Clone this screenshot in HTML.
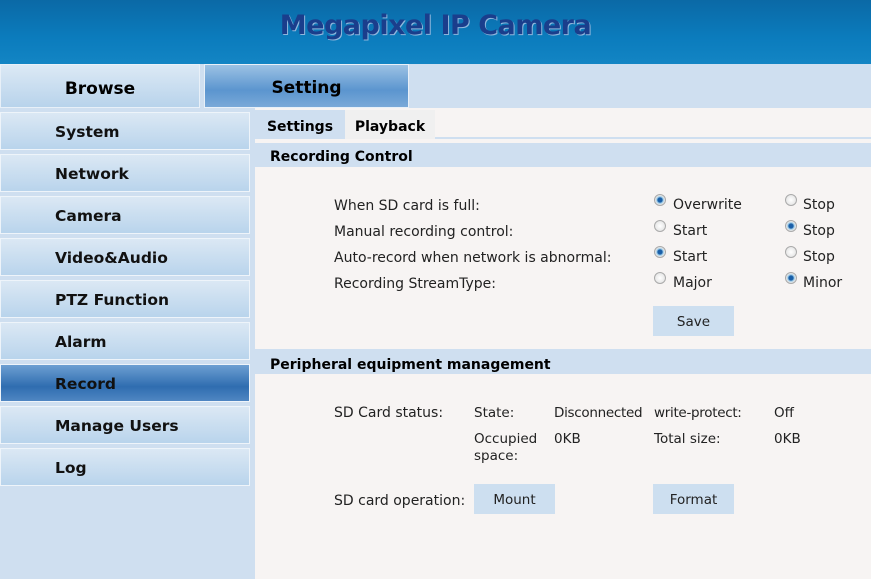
<!DOCTYPE html><html><head><style>
*{margin:0;padding:0;box-sizing:border-box}
body{width:871px;height:579px;overflow:hidden;background:#cfdff0;font-family:"DejaVu Sans","Liberation Sans",sans-serif;position:relative}
.a{position:absolute}
#hd{left:0;top:0;width:871px;height:64px;background:linear-gradient(#0b69a6,#0b7cbd 60%,#1385c4)}
#hd span{position:absolute;left:0;width:871px;top:10px;text-align:center;font:bold 27px "DejaVu Sans",sans-serif;color:#1a3e8c;text-shadow:1px 1px 0 #8fb6dc;letter-spacing:-0.5px}
.tb{top:64px;height:44px;font-weight:bold;font-size:17px;text-align:center;line-height:48px;border:1px solid #e8f0f8}
.nb{left:0;width:250px;height:38px;font-weight:bold;font-size:15.5px;padding-left:54px;line-height:38px;background:linear-gradient(#dbe8f4,#b9d4ec);border:1px solid #eef4fa;color:#111}
.t{font-size:14px;color:#222}
.s{font-size:13.5px;color:#222}
.r{width:12px;height:12px;border-radius:50%;border:1px solid #aaa;background:radial-gradient(#fff,#ddd)}
.r.on{background:radial-gradient(#1a5fa8 30%,#9ccbe8 45%,#e8e8e8 65%)}
.btn{background:#cddff0;height:30px;width:81px;text-align:center;line-height:32px;font-size:13.5px;color:#222}
</style></head><body>
<div id="hd" class="a"><span>Megapixel IP Camera</span></div>
<div class="a tb" style="left:0;width:200px;background:linear-gradient(#dce9f5,#b8d3eb)">Browse</div>
<div class="a tb" style="left:204px;width:205px;line-height:46px;background:linear-gradient(#9cc2e4,#5b95cf 60%,#7aa9d8)">Setting</div>
<div class="a nb" style="top:112px">System</div>
<div class="a nb" style="top:154px">Network</div>
<div class="a nb" style="top:196px">Camera</div>
<div class="a nb" style="top:238px">Video&amp;Audio</div>
<div class="a nb" style="top:280px">PTZ Function</div>
<div class="a nb" style="top:322px">Alarm</div>
<div class="a nb" style="top:364px;background:linear-gradient(#6d9fd2,#2f6db0 60%,#4f86c2)">Record</div>
<div class="a nb" style="top:406px">Manage Users</div>
<div class="a nb" style="top:448px">Log</div>
<div class="a" style="left:255px;top:108px;width:616px;height:471px;background:#f7f4f3"></div>
<div class="a" style="left:255px;top:108px;width:616px;height:31px;background:#f7f4f3;border-bottom:2px solid #cfdff0"></div>
<div class="a" style="left:255px;top:110px;width:90px;height:29px;background:#cfdff0;font-weight:bold;font-size:14px;line-height:34px;text-align:center">Settings</div>
<div class="a" style="left:345px;top:110px;width:90px;height:29px;background:#f0f0f0;font-weight:bold;font-size:14px;line-height:34px;text-align:center">Playback</div>
<div class="a" style="left:255px;top:143px;width:616px;height:24px;background:#cfdff0;font-weight:bold;font-size:14px;line-height:28px;padding-left:15px">Recording Control</div>
<div class="a" style="left:255px;top:349px;width:616px;height:25px;background:#cfdff0;font-weight:bold;font-size:14px;line-height:32px;padding-left:15px">Peripheral equipment management</div>
<div class="a t" style="left:334px;top:198px">When SD card is full:</div>
<div class="a t" style="left:334px;top:224px">Manual recording control:</div>
<div class="a t" style="left:334px;top:250px">Auto-record when network is abnormal:</div>
<div class="a t" style="left:334px;top:276px">Recording StreamType:</div>
<div class="a r on" style="left:654px;top:194px"></div><div class="a t" style="left:673px;top:197px">Overwrite</div>
<div class="a r" style="left:785px;top:194px"></div><div class="a t" style="left:803px;top:197px">Stop</div>
<div class="a r" style="left:654px;top:220px"></div><div class="a t" style="left:673px;top:223px">Start</div>
<div class="a r on" style="left:785px;top:220px"></div><div class="a t" style="left:803px;top:223px">Stop</div>
<div class="a r on" style="left:654px;top:246px"></div><div class="a t" style="left:673px;top:249px">Start</div>
<div class="a r" style="left:785px;top:246px"></div><div class="a t" style="left:803px;top:249px">Stop</div>
<div class="a r" style="left:654px;top:272px"></div><div class="a t" style="left:673px;top:275px">Major</div>
<div class="a r on" style="left:785px;top:272px"></div><div class="a t" style="left:803px;top:275px">Minor</div>
<div class="a btn" style="left:653px;top:306px">Save</div>
<div class="a t" style="left:334px;top:405px">SD Card status:</div>
<div class="a s" style="left:474px;top:405px">State:</div>
<div class="a s" style="left:554px;top:405px;letter-spacing:-0.3px">Disconnected</div>
<div class="a s" style="left:654px;top:405px;letter-spacing:-0.3px">write-protect:</div>
<div class="a s" style="left:774px;top:405px">Off</div>
<div class="a s" style="left:474px;top:431px;line-height:17px">Occupied<br>space:</div>
<div class="a s" style="left:554px;top:431px">0KB</div>
<div class="a s" style="left:654px;top:431px">Total size:</div>
<div class="a s" style="left:774px;top:431px">0KB</div>
<div class="a t" style="left:334px;top:493px">SD card operation:</div>
<div class="a btn" style="left:474px;top:484px">Mount</div>
<div class="a btn" style="left:653px;top:484px">Format</div>
</body></html>
